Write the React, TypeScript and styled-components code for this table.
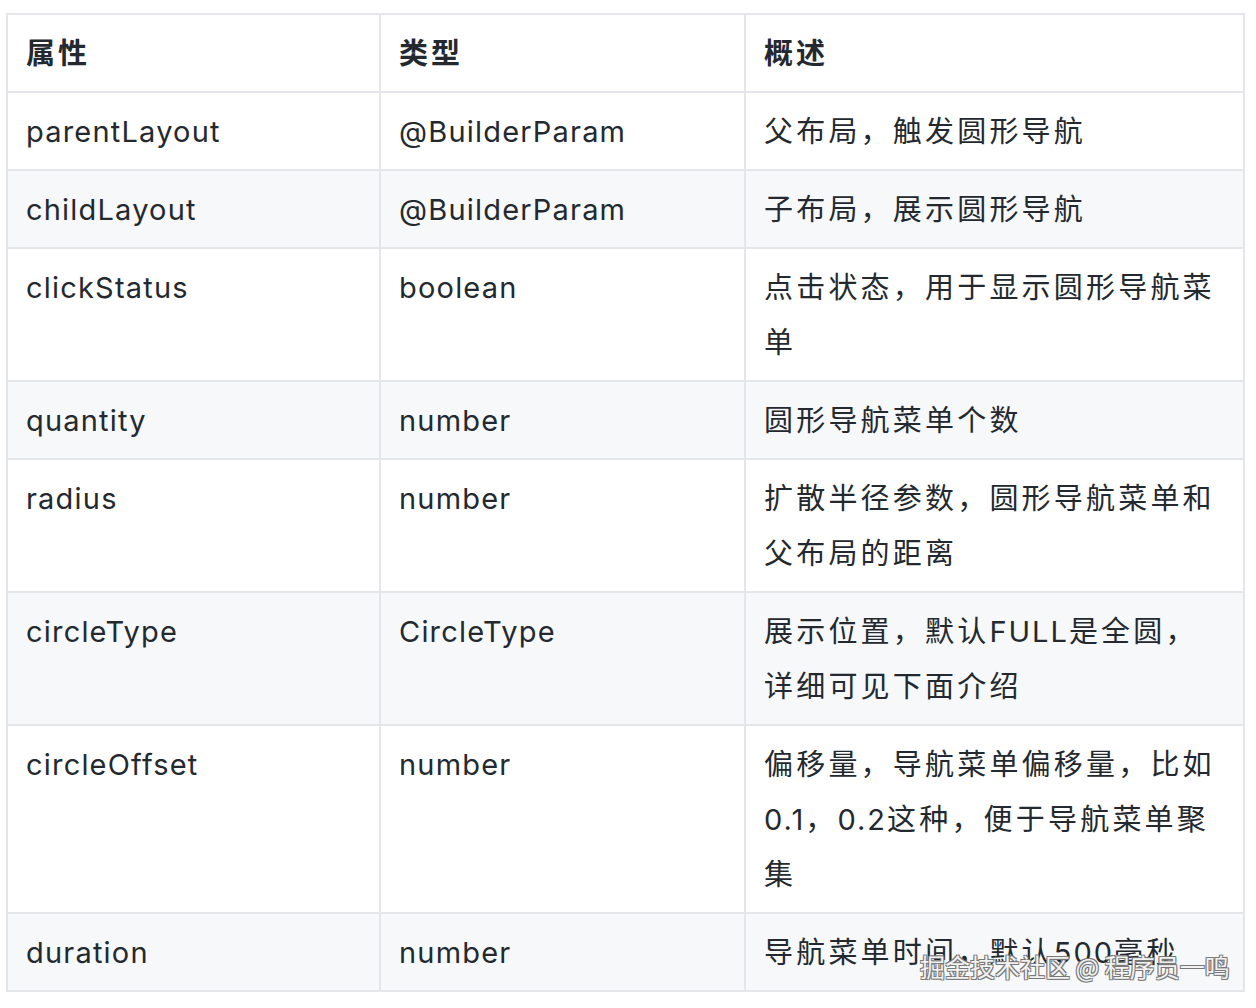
import React from "react";
import styled, { createGlobalStyle } from "styled-components";

const Global = createGlobalStyle`
  html, body { margin: 0; padding: 0; background: #ffffff; }
  body { font-family: Inter, "Noto Sans CJK SC", sans-serif; }
`;

const Page = styled.div`
  position: relative;
  width: 1256px;
  height: 1008px;
  padding: 13px 0 0 6px;
  box-sizing: border-box;
`;

const Table = styled.table`
  border-collapse: collapse;
  table-layout: fixed;
  width: 1237px;
  color: #24292f;
  font-family: Inter, "Noto Sans CJK SC", sans-serif;
  font-size: 29px;
`;

const Row = styled.tr<{ $striped?: boolean }>`
  background: ${(p) => (p.$striped ? "#f6f8fa" : "#ffffff")};
`;

const HeadCell = styled.th`
  border: 2px solid #e4e6e9;
  padding: 10.5px 18px;
  line-height: 55px;
  text-align: left;
  font-weight: 700;
  letter-spacing: 3px;
  vertical-align: top;
`;

const Cell = styled.td<{ $cjk?: boolean }>`
  border: 2px solid #e4e6e9;
  padding: 10.5px 18px;
  line-height: 55px;
  text-align: left;
  font-weight: 400;
  letter-spacing: ${(p) => (p.$cjk ? "3.2px" : "1.2px")};
  vertical-align: top;
`;

const Latin = styled.span`
  letter-spacing: 2px;
`;

const Watermark = styled.div`
  position: absolute;
  left: 920px;
  top: 950px;
  font-family: "Noto Sans CJK SC", sans-serif;
  font-size: 25px;
  line-height: 32px;
  color: #f2f2f2;
  white-space: nowrap;
  text-shadow: -1px -1px 0 #777, 1px -1px 0 #777, -1px 1px 0 #777, 1px 1px 0 #777;
`;

const rows: [string, string, React.ReactNode][] = [
  ["parentLayout", "@BuilderParam", "父布局，触发圆形导航"],
  ["childLayout", "@BuilderParam", "子布局，展示圆形导航"],
  ["clickStatus", "boolean", "点击状态，用于显示圆形导航菜单"],
  ["quantity", "number", "圆形导航菜单个数"],
  ["radius", "number", "扩散半径参数，圆形导航菜单和父布局的距离"],
  [
    "circleType",
    "CircleType",
    <>
      展示位置，默认<Latin>FULL</Latin>是全圆，详细可见下面介绍
    </>,
  ],
  [
    "circleOffset",
    "number",
    <>
      偏移量，导航菜单偏移量，比如<Latin>0.1</Latin>，<Latin>0.2</Latin>这种，便于导航菜单聚集
    </>,
  ],
  [
    "duration",
    "number",
    <>
      导航菜单时间，默认<Latin>500</Latin>毫秒
    </>,
  ],
];

export default function App() {
  return (
    <Page>
      <Global />
      <Table>
        <colgroup>
          <col style={{ width: 373 }} />
          <col style={{ width: 365 }} />
          <col style={{ width: 499 }} />
        </colgroup>
        <thead>
          <Row>
            <HeadCell>属性</HeadCell>
            <HeadCell>类型</HeadCell>
            <HeadCell>概述</HeadCell>
          </Row>
        </thead>
        <tbody>
          {rows.map((r, i) => (
            <Row key={r[0]} $striped={i % 2 === 1}>
              <Cell>{r[0]}</Cell>
              <Cell>{r[1]}</Cell>
              <Cell $cjk>{r[2]}</Cell>
            </Row>
          ))}
        </tbody>
      </Table>
      <Watermark>掘金技术社区 @ 程序员一鸣</Watermark>
    </Page>
  );
}
